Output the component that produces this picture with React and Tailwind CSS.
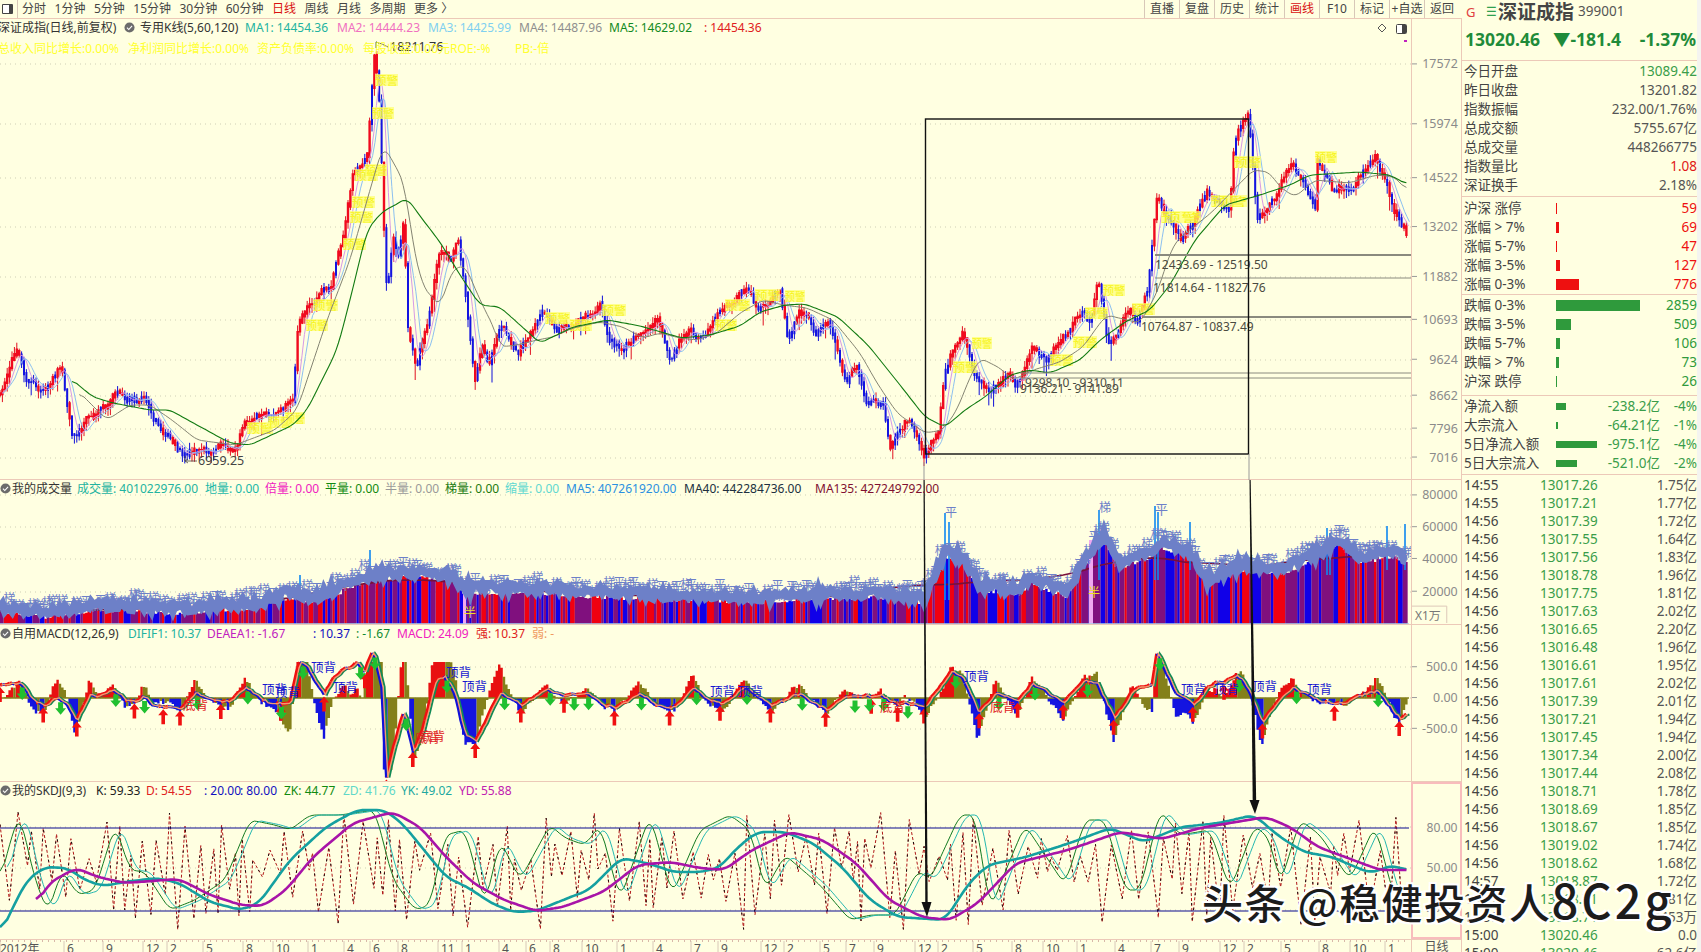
import React from 'react'

const STEP = 2.4
const N = Math.floor(1409 / STEP)
const XS = Array.from({ length: N }, (_, i) => i * STEP)

const seeded = (seed) => () => {
  seed = (seed + 0x6d2b79f5) | 0
  let t = Math.imul(seed ^ (seed >>> 15), 1 | seed)
  t = (t + Math.imul(t ^ (t >>> 7), 61 | t)) ^ t
  return ((t ^ (t >>> 14)) >>> 0) / 4294967296
}

const lerp = (pts, x) => {
  if (x <= pts[0][0]) return pts[0][1]
  for (let i = 1; i < pts.length; i++) {
    if (x <= pts[i][0]) {
      const [x0, y0] = pts[i - 1]
      const [x1, y1] = pts[i]
      return y0 + ((y1 - y0) * (x - x0)) / (x1 - x0 || 1)
    }
  }
  return pts[pts.length - 1][1]
}

const avg = (arr, w) =>
  arr.map((_, i) => {
    const part = arr.slice(Math.max(0, i - w + 1), i + 1)
    return part.reduce((a, b) => a + b, 0) / part.length
  })

const centered = (arr, w) =>
  arr.map((_, i) => {
    const part = arr.slice(Math.max(0, i - w), i + w + 1)
    return part.reduce((a, b) => a + b, 0) / part.length
  })

const line = (xs, ys) => xs.map((x, i) => `${i ? 'L' : 'M'}${x.toFixed(1)} ${ys[i].toFixed(1)}`).join('')

const curve = (pts, w = 2, from = pts[0][0], to = pts[pts.length - 1][0]) => {
  const xs = XS.filter((x) => x >= from && x <= to)
  return line(xs, centered(xs.map((x) => lerp(pts, x)), w))
}

const jitter = (rand, amp, w) => centered(XS.map(() => (rand() - 0.5) * amp * 2), w).map((v) => v * Math.sqrt(2 * w + 1))

const PRICE = [[0,393],[18,347],[25,377],[43,393],[62,370],[72,437],[100,410],[117,395],[142,400],[163,430],[177,447],[187,453],[213,447],[237,448],[243,423],[283,410],[293,397],[298,323],[310,307],[330,287],[343,240],[353,173],[367,157],[375,48],[380,113],[383,207],[387,297],[393,237],[398,263],[404,223],[408,330],[417,363],[427,323],[440,250],[450,260],[458,233],[467,313],[475,377],[482,340],[490,363],[498,330],[503,323],[518,360],[527,333],[543,317],[557,327],[573,327],[600,308],[608,337],[623,353],[640,330],[657,323],[670,358],[690,328],[700,337],[720,310],[748,285],[758,310],[780,290],[788,338],[800,307],[817,333],[827,320],[840,363],[848,383],[857,367],[867,400],[883,407],[890,447],[905,420],[925,453],[938,433],[945,373],[963,327],[973,373],[988,393],[1010,372],[1015,390],[1032,348],[1047,362],[1055,348],[1083,310],[1090,327],[1098,278],[1108,347],[1130,308],[1137,323],[1148,290],[1157,193],[1165,213],[1182,240],[1207,193],[1230,203],[1234,140],[1249,113],[1257,217],[1276,200],[1292,160],[1316,207],[1316,157],[1334,190],[1353,187],[1376,153],[1395,217],[1408,233]]
const GREEN = [[70,378],[93,397],[113,403],[150,410],[170,410],[197,425],[230,443],[250,445],[293,425],[307,410],[337,350],[350,300],[367,230],[382,212],[395,205],[407,198],[423,220],[440,242],[460,275],[480,305],[500,307],[520,325],[540,343],[573,327],[608,320],[640,326],[682,338],[710,335],[740,326],[760,312],[785,305],[805,304],[838,317],[868,345],[900,385],[925,417],[945,427],[965,410],[985,397],[1010,375],[1030,370],[1050,373],[1080,360],[1100,340],[1125,322],[1150,310],[1170,285],[1195,240],[1225,205],[1260,195],[1290,185],[1310,175],[1360,172],[1390,175],[1408,185]]
const GRAY = [[77,390],[107,420],[130,405],[150,405],[172,420],[197,440],[235,445],[275,430],[297,410],[327,320],[350,260],[370,190],[383,145],[395,165],[405,185],[412,240],[422,285],[440,307],[452,270],[465,265],[480,300],[495,330],[500,347],[517,345],[537,340],[553,337],[573,328],[600,322],[623,327],[643,338],[660,333],[680,338],[697,340],[717,333],[740,313],[763,300],[783,305],[807,308],[833,320],[860,353],[877,383],[897,413],[925,433],[943,430],[957,410],[970,377],[980,358],[1000,368],[1013,380],[1033,370],[1060,362],[1083,347],[1100,323],[1107,315],[1127,320],[1140,323],[1157,293],[1170,253],[1177,240],[1211,213],[1253,170],[1269,172],[1280,187],[1295,197],[1315,180],[1349,183],[1376,175],[1395,177],[1408,192]]
const ALERTS = [[375,80,23],[372,113,22],[365,170,22],[355,175,23],[352,202,23],[350,217,23],[343,244,23],[313,305,25],[306,325,22],[247,428,26],[268,422,24],[285,418,20],[545,318,25],[570,325,22],[602,310,24],[725,305,25],[715,325,22],[755,295,25],[785,296,20],[953,367,24],[972,343,20],[1085,313,23],[1103,290,22],[1073,342,24],[1050,360,23],[1132,309,23],[1234,162,27],[1211,201,36],[1161,217,40],[1315,157,22]]
const VOLUME = [[0,613],[45,617],[98,610],[179,613],[223,610],[259,607],[290,597],[312,603],[339,593],[370,580],[415,577],[451,580],[464,593],[536,593],[594,597],[670,600],[760,602],[880,597],[925,603],[945,557],[963,563],[980,590],[1018,595],[1031,583],[1066,597],[1093,553],[1104,540],[1121,570],[1152,557],[1159,547],[1190,557],[1207,583],[1241,570],[1286,573],[1328,553],[1338,543],[1362,563],[1390,557],[1407,563]]
const MACD = [[0,687],[9,683],[20,682],[31,700],[45,707],[58,697],[67,703],[76,723],[89,693],[112,692],[134,705],[145,698],[161,708],[183,708],[194,695],[214,700],[232,700],[246,688],[268,703],[290,700],[299,663],[308,670],[324,695],[344,667],[357,663],[364,675],[373,650],[382,687],[386,777],[393,747],[404,710],[413,750],[422,730],[435,677],[444,675],[455,693],[464,733],[475,740],[487,717],[500,690],[520,707],[545,688],[567,700],[585,697],[616,708],[638,693],[670,708],[692,692],[720,705],[745,690],[770,705],[800,695],[825,712],[850,695],[880,697],[925,707],[951,670],[963,680],[978,712],[997,690],[1018,702],[1031,687],[1063,700],[1085,682],[1097,682],[1114,717],[1133,690],[1152,687],[1157,655],[1176,690],[1193,708],[1207,690],[1235,675],[1250,693],[1262,722],[1293,685],[1314,700],[1345,703],[1376,690],[1400,718],[1409,710]]
const TEAL = [[0,935],[13,907],[27,880],[45,867],[67,868],[85,880],[103,886],[125,882],[156,878],[179,883],[210,902],[241,910],[259,903],[290,860],[326,827],[357,810],[384,810],[402,823],[424,850],[446,877],[469,888],[491,903],[513,912],[536,911],[563,900],[589,890],[621,858],[647,863],[674,872],[700,872],[719,868],[738,847],[757,832],[785,832],[813,843],[842,867],[870,900],[898,917],[945,920],[969,883],[988,865],[1026,857],[1073,842],[1110,828],[1144,842],[1181,827],[1219,823],[1254,815],[1280,837],[1304,852],[1332,857],[1370,873],[1394,865],[1408,872]]
const PURPLE = [[36,905],[49,883],[76,868],[98,877],[125,883],[179,879],[210,895],[241,905],[263,906],[286,890],[313,857],[353,823],[393,812],[420,827],[446,857],[473,883],[504,900],[536,911],[563,907],[603,892],[638,865],[670,862],[700,868],[724,870],[752,850],[790,832],[823,840],[856,863],[889,900],[922,917],[950,920],[978,903],[1016,863],[1068,850],[1120,832],[1162,839],[1200,828],[1266,817],[1290,827],[1318,847],[1380,870],[1408,870]]
const KD = [[0,880],[15,825],[20,815],[35,880],[48,912],[62,870],[78,895],[95,890],[115,825],[130,870],[145,872],[170,910],[195,900],[225,880],[250,820],[275,825],[290,830],[310,815],[340,815],[375,810],[393,880],[415,910],[430,905],[445,835],[465,830],[485,905],[500,840],[520,880],[550,825],[565,838],[585,845],[600,825],[620,900],[650,815],[672,895],[700,830],[730,815],[750,830],[765,890],[785,855],[820,885],[850,920],[870,915],[895,915],[918,870],[930,880],[960,815],[975,815],[990,910],[1010,860],[1025,825],[1045,855],[1065,885],[1085,820],[1105,820],[1125,890],[1140,890],[1160,810],[1180,835],[1210,830],[1230,890],[1255,825],[1270,840],[1280,885],[1300,820],[1320,835],[1350,880],[1375,825],[1395,900],[1408,880]]

const rand = seeded(42)
const jag = jitter(rand, 4.5, 1)
const base = XS.map((x, i) => lerp(PRICE, x) + (x > 373 && x < 378 ? 0 : jag[i]))
const closes = base
const candles = XS.map((x, i) => {
  const y0 = i ? base[i - 1] : base[0]
  const y1 = base[i]
  const rising = base[Math.max(0, i - 3)] > y1
  const up = rising ? rand() < 0.8 : rand() < 0.22
  const top = Math.min(y0, y1) - rand() * 3
  const bottom = Math.max(y0, y1) + rand() * 3
  return { x, open: up ? bottom : top, close: up ? top : bottom, hi: top - rand() * 6, lo: bottom + rand() * 8 + (rand() < 0.05 ? 10 : 0), up }
})
const candlePath = (up) =>
  candles.filter((c) => c.up === up).map((c) => `M${c.x.toFixed(1)} ${c.open.toFixed(1)}V${c.close.toFixed(1)}`).join('')
const wickPath = (up) =>
  candles.filter((c) => c.up === up).map((c) => `M${c.x.toFixed(1)} ${c.hi.toFixed(1)}V${c.lo.toFixed(1)}`).join('')

const volRand = seeded(7)
const volTops = XS.map((x) => lerp(VOLUME, x) - 3 + volRand() * 5)
const volColor = XS.map((_, i) => (volRand() < 0.45 ? 'p' : candles[i].up ? 'r' : 'b'))
const volPath = (k) => XS.map((x, i) => (volColor[i] === k ? `M${x.toFixed(1)} 624V${volTops[i].toFixed(1)}` : '')).join('')
const volBand = XS.map((x) => lerp(VOLUME, x) - 5 + (volRand() - 0.5) * 9)
const volGlyphs = XS.filter((_, i) => i % 2 === 0).map((x, i) => ({
  x,
  y: lerp(VOLUME, x) - 3 - volRand() * 13,
  t: i % 3 === 0 ? '平' : '梯',
}))

const macdJag = jitter(seeded(21), 3.2, 3)
const macdY = XS.map((x, i) => lerp(MACD, x) + macdJag[i])
const macdSlow = centered(macdY, 9)
const macdBars = XS.map((x, i) => ({ x, h: (macdSlow[i] - macdY[i]) * 2.4, up: i > 0 && macdY[i] < macdY[i - 1] }))
const barPath = (test) =>
  macdBars.filter(test).map((b) => `M${b.x.toFixed(1)} 698V${(698 - Math.max(-72, Math.min(36, b.h))).toFixed(1)}`).join('')
const isExtreme = (i, sign) => {
  for (let k = i - 4; k <= i + 4; k++) {
    if (k !== i && macdY[k] !== undefined && (macdY[k] - macdY[i]) * sign >= 0) return false
  }
  return XS[i] < 1400
}
const macdLows = XS.filter((_, i) => isExtreme(i, 1)).map((x) => ({ x, y: macdY[XS.indexOf(x)] }))
const macdHighs = XS.filter((_, i) => isExtreme(i, -1)).map((x) => ({ x, y: macdY[XS.indexOf(x)] }))
const risingPath = (rising) =>
  XS.map((x, i) => (i && macdY[i] < macdY[i - 1] === rising ? `M${XS[i - 1].toFixed(1)} ${macdY[i - 1].toFixed(1)}L${x.toFixed(1)} ${macdY[i].toFixed(1)}` : '')).join('')

const zigRand = seeded(99)
const zig = []
for (let x = 0, up = true; x < 1408; x += 3 + zigRand() * 8, up = !up) {
  zig.push([x, up ? 812 + zigRand() * 48 : 865 + zigRand() * 65])
}
const zigPath = line(zig.map((p) => p[0]), zig.map((p) => p[1]))

const FIBS = [
  { y: 255, x: 1155, w: 2, tx: 1155, ty: 269, t: '12433.69 - 12519.50' },
  { y: 278, x: 1155, w: 1, tx: 1153, ty: 292, t: '11814.64 - 11827.76' },
  { y: 317, x: 1143, w: 2, tx: 1141, ty: 331, t: '10764.87 - 10837.49' },
  { y: 373, x: 1020, w: 1, tx: 1025, ty: 387, t: '9298.10 - 9310.11' },
  { y: 378, x: 1020, w: 1, tx: 1020, ty: 393, t: '9136.21 - 9141.89' },
]
const DATES = [[0,'2012年'],[67,'6'],[106,'9'],[146,'12'],[170,'2'],[206,'5'],[246,'8'],[276,'10'],[311,'1'],[347,'4'],[373,'6'],[401,'8'],[441,'11'],[465,'1'],[502,'4'],[529,'6'],[553,'8'],[585,'10'],[620,'1'],[656,'4'],[694,'7'],[721,'9'],[764,'12'],[787,'2'],[823,'5'],[849,'7'],[877,'9'],[918,'12'],[941,'2'],[976,'5'],[1015,'8'],[1046,'10'],[1080,'1'],[1118,'4'],[1154,'7'],[1182,'9'],[1223,'12'],[1247,'2'],[1284,'5'],[1322,'8'],[1353,'10'],[1388,'1']]
const DIVERGE = [[311,672,'顶背','#1818d0'],[262,694,'顶背','#1818d0'],[275,697,'顶背','#1818d0'],[333,692,'顶背','#1818d0'],[446,677,'顶背','#1818d0'],[462,691,'顶背','#1818d0'],[710,696,'顶背','#1818d0'],[738,696,'顶背','#1818d0'],[964,681,'顶背','#1818d0'],[1181,694,'顶背','#1818d0'],[1214,694,'顶背','#1818d0'],[1252,691,'顶背','#1818d0'],[1307,694,'顶背','#1818d0'],[183,710,'底背','#e02020'],[415,743,'底背','#e02020'],[420,741,'底背','#e02020'],[880,712,'底背','#e02020'],[990,712,'底背','#e02020']]

const CheckDot = () => (
  <svg viewBox="0 0 12 12" className="w-[11px] h-[11px] shrink-0">
    <circle cx="6" cy="6" r="5.5" fill="#6b6b6b" />
    <path d="M3.2 6.2l2 2 3.6-4" fill="none" stroke="#fff" strokeWidth="1.2" />
  </svg>
)

const Legend = ({ items, className = '' }) => (
  <div className={`relative z-10 flex items-center whitespace-nowrap text-[12px] ${className}`}>
    {items.map(([text, color, left], i) => (
      <span key={i} className="absolute top-0 leading-[17px]" style={{ left, color }}>{text}</span>
    ))}
  </div>
)

const Pane = ({ top, height, legend, axis, boxed, axisExtra, children }) => (
  <div className="flex border-b border-[#ecc9b8]" style={{ height }}>
    <div className="relative w-[1411px] overflow-hidden">
      <svg className="absolute inset-0 w-[1411px]" style={{ height }} viewBox={`0 ${top} 1411 ${height}`}>
        {axis.map(([y]) => (
          <path key={y} d={`M0 ${y}H1411`} stroke="#cfcfb6" strokeDasharray="1 4" />
        ))}
        {children}
      </svg>
      {legend}
    </div>
    <div className={`w-[51px] shrink-0 ${boxed ? 'border-2 border-[#f8bcbc]' : 'border-x border-[#ecc9b8]'}`}>
      <svg className="w-full h-full" viewBox={`1411 ${top} 50 ${height}`} preserveAspectRatio="xMinYMin slice">
        {axis.map(([y, label]) => (
          <g key={y}>
            {!boxed && <path d={`M1411 ${y}H1416`} stroke="#999" />}
            <text x="1457" y={y + 4.5} textAnchor="end" fontSize="12.5" fill="#8a8a8a">{label}</text>
          </g>
        ))}
        {axisExtra}
      </svg>
    </div>
  </div>
)

const TOOL_LEFT = ['分时', '1分钟', '5分钟', '15分钟', '30分钟', '60分钟', '日线', '周线', '月线', '多周期', '更多 〉']
const TOOL_RIGHT = ['直播', '复盘', '历史', '统计', '画线', 'F10', '标记', '+自选', '返回']

const Toolbar = () => (
  <div className="flex items-center h-[19px] border-b border-[#ecc9b8] text-[12px] text-[#444] whitespace-nowrap">
    <div className="w-[18px] h-full flex items-center border-r border-[#d8c8b8] shrink-0">
      <div className="w-[11px] h-[10px] ml-[2px] bg-white border border-[#444] border-r-[4px] rounded-[1px]" />
    </div>
    <div className="flex items-center gap-[8.5px] ml-[4px]">
      {TOOL_LEFT.map((t) => (
        <span key={t} className={t === '日线' ? 'text-[#d81010]' : ''}>{t}</span>
      ))}
    </div>
    <div className="ml-auto flex h-full pr-[3px]">
      {TOOL_RIGHT.map((t) => (
        <span key={t} className={`w-[35px] text-center border-l border-[#d8c8b8] leading-[18px] ${t === '画线' ? 'text-[#d81010]' : ''}`}>{t}</span>
      ))}
    </div>
  </div>
)

const MainChart = () => (
  <Pane
    top={19}
    height={461}
    axis={[[64,'17572'],[124,'15974'],[178,'14522'],[227,'13202'],[277,'11882'],[320,'10693'],[360,'9624'],[396,'8662'],[429,'7796'],[458,'7016']]}
    legend={
      <>
        <Legend className="h-[21px]" items={[
          ['深证成指(日线,前复权)', '#333', -2], ['专用K线(5,60,120)', '#333', 140],
          ['MA1: 14454.36', '#22b3a0', 245], ['MA2: 14444.23', '#f070c0', 337], ['MA3: 14425.99', '#80d0f0', 428],
          ['MA4: 14487.96', '#8f8f8f', 519], ['MA5: 14629.02', '#118a22', 609], [': 14454.36', '#e02020', 704],
        ]} />
        <div className="absolute left-[124px] top-[3px]"><CheckDot /></div>
        <Legend items={[
          ['总收入同比增长:0.00%', '#ffff30', -2], ['净利润同比增长:0.00%', '#ffff30', 128],
          ['资产负债率:0.00%', '#ffff30', 257], ['每股收益:0.00元ROE:-%', '#ffff30', 363], ['PB:-倍', '#ffff30', 515],
        ]} />
        <svg className="absolute left-[1375px] top-[2px] w-[32px] h-[24px]" viewBox="0 0 32 24">
          <path d="M7 3l4 4-4 4-4-4z" fill="none" stroke="#555" />
          <rect x="21.5" y="3.5" width="10" height="9" rx="1" fill="#fff" stroke="#444" />
          <rect x="27" y="4" width="4" height="8" fill="#444" />
          <path d="M29 20h3" stroke="#c020c0" strokeWidth="2" />
        </svg>
      </>
    }
  >
    <path d={wickPath(true)} stroke="#e01020" strokeWidth="1" />
    <path d={wickPath(false)} stroke="#1010d8" strokeWidth="1" />
    <path d={candlePath(false)} stroke="#1414e0" strokeWidth="2" />
    <path d={candlePath(true)} stroke="#f00a1e" strokeWidth="2.4" />
    <path d={line(XS.map((x) => x + 2), avg(closes, 4))} fill="none" stroke="#d79ae6" strokeWidth="1" />
    <path d={line(XS.map((x) => x + 3), avg(closes, 6))} fill="none" stroke="#8cc0f0" strokeWidth="1" />
    {ALERTS.map(([x, y, w], i) => (
      <g key={i}>
        <rect x={x} y={y - 6} width={w} height={12} fill="#ffff70" opacity="0.7" />
        <text x={x} y={y + 4.5} fontSize="11.5" fill="#f6f420" textLength={w} lengthAdjust="spacingAndGlyphs">预警</text>
      </g>
    ))}
    <path d={curve(GRAY)} fill="none" stroke="#848472" strokeWidth="1" />
    <path d={curve(GREEN)} fill="none" stroke="#117a11" strokeWidth="1.1" />
    {FIBS.map((f) => (
      <g key={f.t}>
        <path d={`M${f.x} ${f.y}H1411`} stroke="#8a8a7e" strokeWidth={f.w} />
        <text x={f.tx} y={f.ty} fontSize="12" fill="#4a4a40">{f.t}</text>
      </g>
    ))}
    <path d="M388 47L382 44L376 42V48M376 42l3 1" fill="none" stroke="#444" strokeWidth="0.8" />
    <text x="390" y="51" fontSize="12.5" fill="#333">18211.76</text>
    <path d="M197 461H185M185 461l3-2M185 461l3 2M185 456V461" fill="none" stroke="#444" strokeWidth="0.8" />
    <text x="198" y="465" fontSize="12.5" fill="#444">6959.25</text>
  </Pane>
)

const VolumeChart = () => (
  <Pane
    top={480}
    height={145}
    axis={[[495,'80000'],[527,'60000'],[559,'40000'],[592,'20000']]}
    axisExtra={
      <g>
        <path d="M1411 607H1446V624" fill="none" stroke="#ddc8b8" />
        <text x="1414" y="621" fontSize="12" fill="#777">X1万</text>
      </g>
    }
    legend={
      <>
        <div className="absolute left-0 top-[3px]"><CheckDot /></div>
        <Legend items={[
          ['我的成交量', '#333', 12], ['成交量: 401022976.00', '#22b3a0', 77], ['地量: 0.00', '#18b8a8', 205], ['倍量: 0.00', '#f020c0', 265],
          ['平量: 0.00', '#108a10', 325], ['半量: 0.00', '#999', 385], ['梯量: 0.00', '#1a7a10', 445], ['缩量: 0.00', '#60d8d0', 505],
          ['MA5: 407261920.00', '#2a90e0', 566], ['MA40: 442284736.00', '#203040', 684], ['MA135: 427249792.00', '#801030', 815],
        ]} />
      </>
    }
  >
    <path d={volPath('r')} stroke="#f00010" strokeWidth="2.5" />
    <path d={volPath('b')} stroke="#1000e8" strokeWidth="2.5" />
    <path d={volPath('p')} stroke="#80107e" strokeWidth="2.5" />
    <path d={line(XS, centered(XS.map((x) => lerp(VOLUME, x)), 30).map((y) => y - 3))} fill="none" stroke="#7a1038" strokeWidth="1.7" />
    <path d="M945 600V513M949 600V522M1155 580V506M1158 580V512M1099 580V510M1190 570V522M1327 575V528M1330 575V533M1387 570V526M1405 570V524M370 575V550M300 590V575" stroke="#1088f0" strokeWidth="1.6" />
    <path d="M1089 540h4V624h-4zM463 585h3V624h-3z" fill="#f0a8f0" />
    <path d={line(XS, volBand)} fill="none" stroke="#6d80c8" strokeWidth="8" />
    {volGlyphs.map((g, i) => (
      <text key={i} x={g.x - 6} y={g.y + 4} fontSize="12" fill="#6d80c8">{g.t}</text>
    ))}
    <text x="945" y="517" fontSize="12" fill="#6d80c8">平</text>
    <text x="1099" y="512" fontSize="12" fill="#6d80c8">梯</text>
    <text x="1155" y="514" fontSize="13" fill="#6d80c8">平</text>
    <text x="464" y="617" fontSize="12" fill="#f0e020">半</text>
    <text x="1088" y="597" fontSize="12" fill="#f0e020">半</text>
    <path d="M0 624H1409" stroke="#a8d4ee" strokeWidth="1.5" />
  </Pane>
)

const MacdChart = () => (
  <Pane
    top={625}
    height={157}
    axis={[[667,'500.0'],[698,'0.00'],[729,'-500.0']]}
    legend={
      <>
        <div className="absolute left-0 top-[3px]"><CheckDot /></div>
        <Legend items={[
          ['自用MACD(12,26,9)', '#333', 12], ['DIFIF1: 10.37', '#22b3a0', 128], ['DEAEA1: -1.67', '#c020c0', 207], [': 10.37', '#1010c0', 313],
          [': -1.67', '#108a30', 356], ['MACD: 24.09', '#f020c0', 397], ['强: 10.37', '#e02020', 476], ['弱: -', '#f09a60', 532],
        ]} />
      </>
    }
  >
    <path d={barPath((b) => b.h >= 0 && b.up)} stroke="#e81010" strokeWidth="2.4" />
    <path d={barPath((b) => (b.h >= 0 && !b.up) || (b.h < 0 && b.up))} stroke="#84801a" strokeWidth="2.4" />
    <path d={barPath((b) => b.h < 0 && !b.up)} stroke="#1414e0" strokeWidth="2.4" />
    <path d="M0 698H1409" stroke="#84801a" strokeWidth="1.5" />
    <path d={line(XS.map((x) => x + 3), macdY)} fill="none" stroke="#118a55" strokeWidth="2" />
    <path d={risingPath(true)} fill="none" stroke="#f01010" strokeWidth="3.4" />
    <path d={risingPath(false)} fill="none" stroke="#1010d8" strokeWidth="2.8" />
    <path d={line(XS.map((x) => x + 1.5), macdY)} fill="none" stroke="#f09a70" strokeWidth="1.4" />
    {macdLows.map((a) => (
      <path key={a.x} d={`M${a.x} ${a.y + 2}l-5 6h3.2v9h3.6v-9h3.2z`} fill="#f01010" />
    ))}
    {macdHighs.map((a) => (
      <path key={a.x} d={`M${a.x + 3} ${a.y + 17}l-5.5-6.5h3v-6h5v6h3z`} fill="#20c030" />
    ))}
    {DIVERGE.map(([x, y, t, c], i) => (
      <text key={i} x={x} y={y} fontSize="12.5" fill={c}>{t}</text>
    ))}
  </Pane>
)

const SkdjChart = () => (
  <Pane
    top={782}
    height={158}
    boxed
    axis={[[827,'80.00'],[868,'50.00'],[910,'20.00']]}
    legend={
      <>
        <div className="absolute left-0 top-[3px]"><CheckDot /></div>
        <Legend items={[
          ['我的SKDJ(9,3)', '#333', 12], ['K: 59.33', '#222', 96], ['D: 54.55', '#e02020', 146], [': 20.00', '#1010c0', 204],
          [': 80.00', '#1010c0', 240], ['ZK: 44.77', '#108a10', 284], ['ZD: 41.76', '#60d8c8', 343], ['YK: 49.02', '#22a8a0', 401], ['YD: 55.88', '#c020b0', 459],
        ]} />
      </>
    }
  >
    <path d={zigPath} fill="none" stroke="#b01818" strokeWidth="1" strokeDasharray="3 2" />
    <path d={zigPath} fill="none" stroke="#111" strokeWidth="1" strokeDasharray="2 13" />
    <path d="M0 828H1409M0 911H1409" stroke="#0a0a90" strokeWidth="1.2" />
    <path d={curve(KD)} fill="none" stroke="#137a20" strokeWidth="1" />
    <path d={curve(KD.map(([x, y]) => [x + 6, y]))} fill="none" stroke="#25b8b0" strokeWidth="1" />
    <path d={curve(TEAL, 3)} fill="none" stroke="#15a0a0" strokeWidth="2.6" />
    <path d={curve(PURPLE, 3)} fill="none" stroke="#a814a8" strokeWidth="2.6" />
  </Pane>
)

const DateAxis = () => (
  <div className="flex h-[12px] overflow-hidden">
    <svg className="w-[1411px] h-[12px] shrink-0" viewBox="0 940 1411 12">
      <path d="M0 941H1409" stroke="#d8b8a8" strokeWidth="2" strokeDasharray="1 5" />
      {DATES.map(([x, t]) => (
        <g key={t + x}>
          <path d={`M${x + (x ? -3 : 0)} 941V952`} stroke="#d8c8b8" />
          <text x={x} y="953" fontSize="12" fill="#555">{t}</text>
        </g>
      ))}
    </svg>
    <span className="flex-1 text-center text-[12px] leading-[14px] text-[#555] border-x border-[#ecc9b8]">日线</span>
  </div>
)

const StatRow = ({ label, value, color = '#555' }) => (
  <div className="flex justify-between items-center h-[19px] pt-[2px]">
    <span className="text-[#444]">{label}</span>
    <span style={{ color }}>{value}</span>
  </div>
)

const BreadthRow = ({ label, width, value, color }) => (
  <div className="flex items-center h-[19px] pt-[2px]">
    <span className="w-[92px] text-[#444] shrink-0">{label}</span>
    <span className="h-[11px]" style={{ width, background: color }} />
    <span className="ml-auto" style={{ color }}>{value}</span>
  </div>
)

const STATS = [
  ['今日开盘', '13089.42', '#3a9d4a'], ['昨日收盘', '13201.82'], ['指数振幅', '232.00/1.76%'], ['总成交额', '5755.67亿'],
  ['总成交量', '448266775'], ['指数量比', '1.08', '#e01818'], ['深证换手', '2.18%'],
]
const RISE = [['沪深 涨停', 1, '59'], ['涨幅 > 7%', 3, '69'], ['涨幅 5-7%', 1, '47'], ['涨幅 3-5%', 4, '127'], ['涨幅 0-3%', 23, '776']]
const FALL = [['跌幅 0-3%', 84, '2859'], ['跌幅 3-5%', 15, '509'], ['跌幅 5-7%', 4, '106'], ['跌幅 > 7%', 3, '73'], ['沪深 跌停', 1, '26']]
const FLOW = [['净流入额', 10, '-238.2亿', '-4%'], ['大宗流入', 2, '-64.21亿', '-1%'], ['5日净流入额', 41, '-975.1亿', '-4%'], ['5日大宗流入', 21, '-521.0亿', '-2%']]
const TICKS = [
  ['14:55','13017.26','1.75亿'],['14:55','13017.21','1.77亿'],['14:56','13017.39','1.72亿'],['14:56','13017.55','1.64亿'],['14:56','13017.56','1.83亿'],
  ['14:56','13018.78','1.96亿'],['14:56','13017.75','1.81亿'],['14:56','13017.63','2.02亿'],['14:56','13016.65','2.20亿'],['14:56','13016.48','1.96亿'],
  ['14:56','13016.61','1.95亿'],['14:56','13017.61','2.02亿'],['14:56','13017.39','2.01亿'],['14:56','13017.21','1.94亿'],['14:56','13017.45','1.94亿'],
  ['14:56','13017.34','2.00亿'],['14:56','13017.44','2.08亿'],['14:56','13018.71','1.78亿'],['14:56','13018.69','1.85亿'],['14:56','13018.67','1.85亿'],
  ['14:56','13019.02','1.74亿'],['14:56','13018.62','1.68亿'],['14:57','13018.87','1.72亿'],['14:57','13018.71','1.81亿'],['14:58','13018.71','5453万'],
  ['15:00','13020.46','0.0'],['15:00','13020.46','62.6亿'],
]

const RightPanel = () => (
  <div className="w-[235px] shrink-0 text-[13.5px] leading-none whitespace-nowrap">
    <div className="pl-[3px] pr-[1px] h-[61px] border-b border-[#ecc9b8]">
      <div className="flex items-center h-[24px]">
        <span className="text-[#e04040] text-[13px] w-[21px] pl-[1px]">G</span>
        <span className="text-[#30a050] text-[12px] w-[12px]">☰</span>
        <span className="text-[19px] font-bold text-[#444]">深证成指</span>
        <span className="ml-[4px] text-[#555] text-[13.5px]">399001</span>
      </div>
      <div className="flex items-center h-[30px] pt-[2px] text-[#1f8b3a] font-bold text-[17.5px]">
        <span className="w-[88px]">13020.46</span>
        <span>▼-181.4</span>
        <span className="ml-auto">-1.37%</span>
      </div>
    </div>
    <div className="pl-[2px] border-b border-[#ecc9b8] h-[136px]">
      {STATS.map(([l, v, c]) => <StatRow key={l} label={l} value={v} color={c} />)}
    </div>
    <div className="pl-[2px] pt-[1px] pb-[1px] border-b border-[#ecc9b8]">
      {RISE.map(([l, w, v]) => <BreadthRow key={l} label={l} width={w} value={v} color="#ee1010" />)}
    </div>
    <div className="pl-[2px] pb-[5px] border-b border-[#ecc9b8]">
      {FALL.map(([l, w, v]) => <BreadthRow key={l} label={l} width={w} value={v} color="#2f9a3c" />)}
    </div>
    <div className="pl-[2px] pb-[2px] border-b border-[#ecc9b8]">
      {FLOW.map(([l, w, v, p]) => (
        <div key={l} className="flex items-center h-[19px] pt-[2px]">
          <span className="w-[92px] text-[#444] shrink-0">{l}</span>
          <span className="h-[7px] bg-[#2f9a3c]" style={{ width: w }} />
          <span className="ml-auto text-[#3a9d4a]">{v}</span>
          <span className="w-[37px] text-right text-[#3a9d4a]">{p}</span>
        </div>
      ))}
    </div>
    <div className="pl-[2px] pt-[1px]">
      {TICKS.map(([t, p, a], i) => (
        <div key={i} className="flex items-center h-[18px] pt-[2px]">
          <span className="w-[76px] text-[#444]">{t}</span>
          <span className="text-[#3a9d4a]">{p}</span>
          <span className="ml-auto text-[#555]">{a}</span>
        </div>
      ))}
    </div>
  </div>
)

const App = () => (
  <div className="relative flex w-[1701px] h-[952px] overflow-hidden bg-[#ffffe1] [font-family:'Noto_Sans','Noto_Sans_CJK_SC',sans-serif]">
    <div className="relative w-[1462px] shrink-0">
      <Toolbar />
      <MainChart />
      <VolumeChart />
      <MacdChart />
      <SkdjChart />
      <DateAxis />
      <svg className="absolute inset-0 w-[1411px] h-[952px] pointer-events-none" viewBox="0 0 1411 952">
        <rect x="925.5" y="119" width="323" height="335" fill="none" stroke="#111" strokeWidth="1.4" />
        <path d="M924 462V480M1249 454V480" stroke="#999" strokeWidth="1" />
        <path d="M923.5 480h1.2l3 425h-2.4z" fill="#111" />
        <path d="M921.5 902h10l-4.5 15z" fill="#111" />
        <path d="M1249.5 480h1.2l5.5 322h-3.5z" fill="#111" />
        <path d="M1249.5 800h10l-4.5 14z" fill="#111" />
      </svg>
    </div>
    <RightPanel />
    <div className="w-[4px] bg-[#f4f4f0]" />
    <div className="absolute left-[1202px] top-[874px] whitespace-nowrap text-[41px] leading-[50px] tracking-[1.5px] font-medium text-[#1c1c1c] [font-family:'Noto_Sans_CJK_SC',sans-serif] [text-shadow:2px_2px_0_#fff,-2px_-2px_0_#fff,2px_-2px_0_#fff,-2px_2px_0_#fff]">
      头条 @稳健投资人<span className="text-[47px] tracking-[3px]">8C2g</span>
    </div>
  </div>
)

export default App
